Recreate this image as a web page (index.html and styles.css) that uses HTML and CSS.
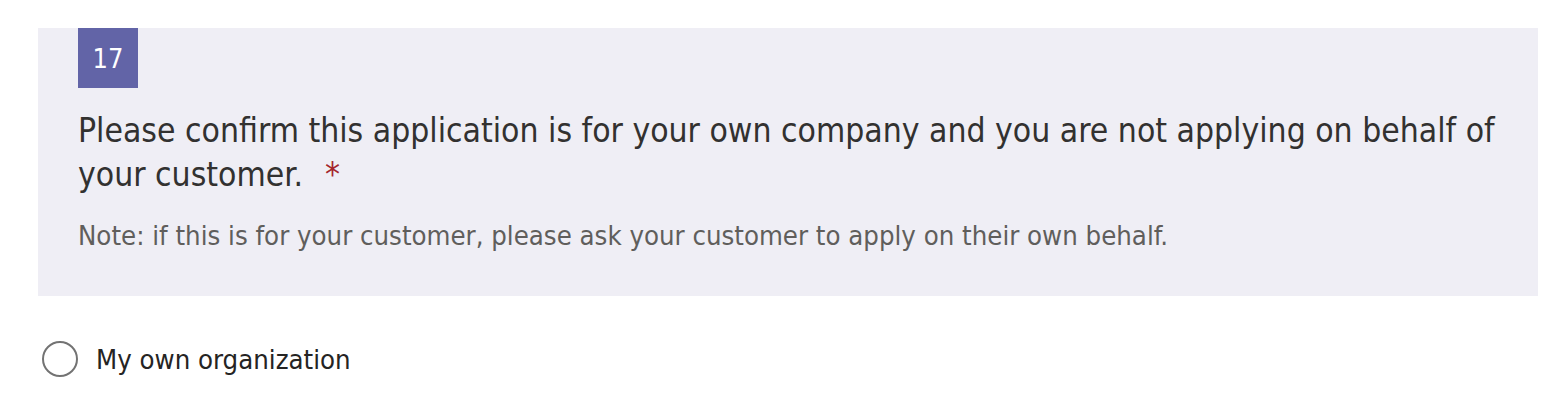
FILE: index.html
```html
<!DOCTYPE html>
<html>
<head>
<meta charset="utf-8">
<link rel="stylesheet" href="styles.css">
</head>
<body>
<div class="page">
  <section class="question">
    <div class="badge">17</div>
    <h2 class="title">Please confirm this application is for your own company and you are not applying on behalf of your customer.<span class="req">*</span></h2>
    <p class="note">Note: if this is for your customer, please ask your customer to apply on their own behalf.</p>
  </section>
  <div class="options">
    <label class="option"><span class="radio"></span><span class="opt-text">My own organization</span></label>
  </div>
</div>
</body>
</html>
```
FILE: styles.css
```css
html, body { margin: 0; padding: 0; background: #ffffff; }
body { font-family: "DejaVu Sans Condensed", "DejaVu Sans", sans-serif; }
.page { padding: 28px 22px 0 38px; }
.question {
  background: #efeef5;
  padding: 0 30px 44px 40px;
  width: 1430px;
}
.badge {
  width: 60px; height: 60px;
  background: #6264a7;
  color: #ffffff;
  font-size: 27px;
  display: flex; align-items: center; justify-content: center;
}
.title {
  margin: 21px 0 0 0;
  font-weight: normal;
  font-size: 33.4px;
  line-height: 44px;
  color: #323130;
}
.req { color: #a4262c; margin-left: 22px; }
.note {
  margin: 23px 0 0 0;
  font-size: 27.3px;
  line-height: 32px;
  color: #605e5c;
}
.options { padding: 43px 0 0 4px; }
.option { display: flex; align-items: center; gap: 18px; }
.radio {
  width: 32px; height: 32px;
  border: 2px solid #737373;
  border-radius: 50%;
  background: #fff;
  flex: none;
}
.opt-text { font-size: 27.3px; line-height: 36px; padding-top: 3px; color: #252423; }
```
